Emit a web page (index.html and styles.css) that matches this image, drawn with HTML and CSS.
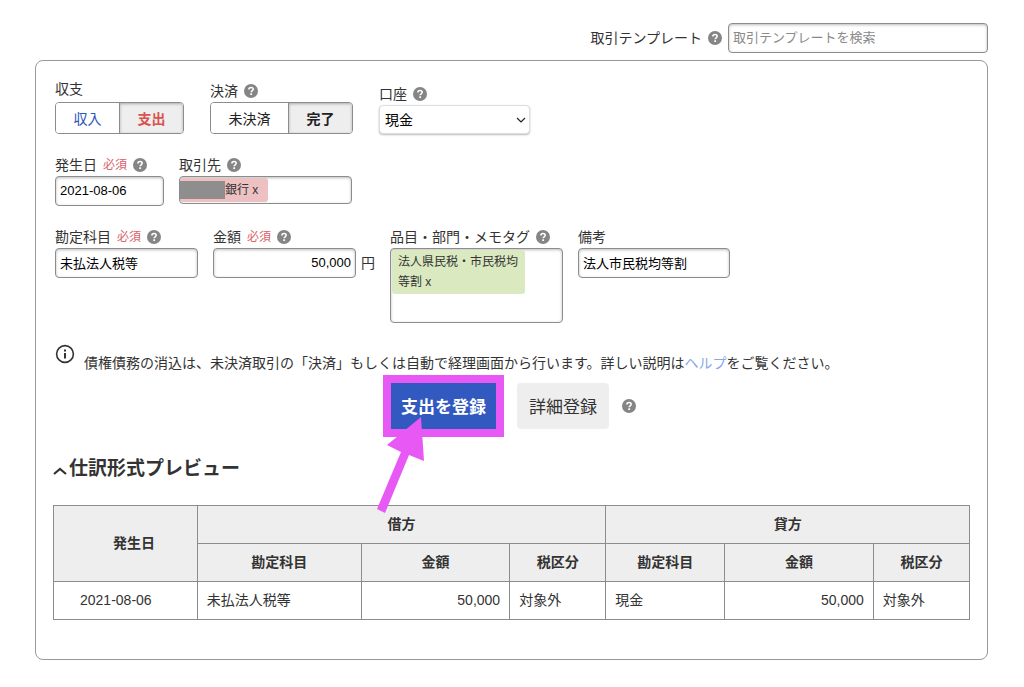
FILE: index.html
```html
<!DOCTYPE html>
<html lang="ja">
<head>
<meta charset="utf-8">
<meta name="viewport" content="width=device-width, initial-scale=1">
<title>取引の登録</title>
<link rel="stylesheet" href="styles.css">
</head>
<body>
<svg class="symbols" aria-hidden="true">
  <symbol id="help" viewBox="0 0 16 16">
    <circle cx="8" cy="8" r="8" fill="#858585"/>
    <path d="M5.6 6.4C5.6 4.8 6.6 4 8.1 4s2.4.9 2.4 2.1c0 1.7-2.3 1.7-2.3 3.3" fill="none" stroke="#fff" stroke-width="1.8"/>
    <rect x="7.2" y="10.6" width="2" height="2" fill="#fff"/>
  </symbol>
</svg>

<div class="template-search">
  <label for="template">取引テンプレート</label>
  <svg class="help"><use href="#help"/></svg>
  <input class="text-input template-input" id="template" type="text" placeholder="取引テンプレートを検索">
</div>

<main class="panel">
  <form class="entry">
    <div class="row row-wide">
      <div class="field field-spaced">
        <div class="label" id="l-kind">収支</div>
        <div class="toggle" role="group" aria-labelledby="l-kind">
          <button class="toggle-item income" type="button" aria-pressed="false">収入</button>
          <button class="toggle-item expense is-on" type="button" aria-pressed="true">支出</button>
        </div>
      </div>
      <div class="field">
        <div class="label"><span id="l-settle">決済</span><svg class="help"><use href="#help"/></svg></div>
        <div class="toggle" role="group" aria-labelledby="l-settle">
          <button class="toggle-item unsettled" type="button" aria-pressed="false">未決済</button>
          <button class="toggle-item is-on" type="button" aria-pressed="true">完了</button>
        </div>
      </div>
      <div class="field">
        <div class="label"><label for="account">口座</label><svg class="help"><use href="#help"/></svg></div>
        <div class="select-wrap">
          <select class="select" id="account"><option>現金</option></select>
          <svg class="select-arrow" viewBox="0 0 10 6"><path d="M1 1l4 4 4-4" fill="none" stroke="#222" stroke-width="1.2"/></svg>
        </div>
      </div>
    </div>

    <div class="row">
      <div class="field">
        <div class="label"><label for="date">発生日</label><span class="required">必須</span><svg class="help"><use href="#help"/></svg></div>
        <input class="text-input w-date" id="date" type="text" value="2021-08-06">
      </div>
      <div class="field">
        <div class="label"><span id="l-partner">取引先</span><svg class="help"><use href="#help"/></svg></div>
        <div class="tag-box partner-box" role="group" aria-labelledby="l-partner">
          <span class="tag tag-partner"><span class="mask"></span>銀行 <button class="tag-remove" type="button">x</button></span>
        </div>
      </div>
    </div>

    <div class="row">
      <div class="field">
        <div class="label"><label for="item">勘定科目</label><span class="required">必須</span><svg class="help"><use href="#help"/></svg></div>
        <input class="text-input w-item" id="item" type="text" value="未払法人税等">
      </div>
      <div class="field">
        <div class="label"><label for="amount">金額</label><span class="required">必須</span><svg class="help"><use href="#help"/></svg></div>
        <div class="amount">
          <input class="text-input w-item amount-input" id="amount" type="text" value="50,000">
          <span>円</span>
        </div>
      </div>
      <div class="field">
        <div class="label"><span id="l-tags">品目・部門・メモタグ</span><svg class="help"><use href="#help"/></svg></div>
        <div class="tag-box memo-box" role="group" aria-labelledby="l-tags">
          <span class="tag tag-memo">法人県民税・市民税均<wbr>等割 <button class="tag-remove" type="button">x</button></span>
        </div>
      </div>
      <div class="field">
        <div class="label"><label for="note">備考</label></div>
        <input class="text-input w-note" id="note" type="text" value="法人市民税均等割">
      </div>
    </div>

    <div class="notice">
      <svg class="info" viewBox="0 0 20 20"><circle cx="10" cy="10" r="8.4" fill="none" stroke="#333" stroke-width="1.6"/><path d="M10 9v5.4M10 5.4v2" stroke="#333" stroke-width="2"/></svg>
      <p>債権債務の消込は、未決済取引の「決済」もしくは自動で経理画面から行います。詳しい説明は<a href="#">ヘルプ</a>をご覧ください。</p>
    </div>

    <div class="actions">
      <div class="highlight">
        <button class="btn btn-primary" type="submit">支出を登録</button>
        <svg class="arrow" viewBox="0 0 50 97"><path d="M44 0L47 44L32 38L8 96L0 92L24 35L10 28Z" fill="#e858f5"/></svg>
      </div>
      <button class="btn btn-secondary" type="button">詳細登録</button>
      <svg class="help"><use href="#help"/></svg>
    </div>
  </form>

  <h2 class="preview-title">
    <svg class="chevron" viewBox="0 0 14 8"><path d="M1 7l6-5 6 5" fill="none" stroke="#333" stroke-width="2.2"/></svg>仕訳形式プレビュー
  </h2>

  <table class="journal">
    <colgroup><col class="c-date"><col class="c-debit-item"><col class="c-amount"><col class="c-tax"><col class="c-credit-item"><col class="c-amount"><col class="c-tax"></colgroup>
    <thead>
      <tr><th class="date-head" rowspan="2">発生日</th><th colspan="3">借方</th><th colspan="3">貸方</th></tr>
      <tr><th>勘定科目</th><th>金額</th><th>税区分</th><th>勘定科目</th><th>金額</th><th>税区分</th></tr>
    </thead>
    <tbody>
      <tr><td class="date-cell">2021-08-06</td><td>未払法人税等</td><td class="num">50,000</td><td>対象外</td><td>現金</td><td class="num">50,000</td><td>対象外</td></tr>
    </tbody>
  </table>
</main>
</body>
</html>
```

FILE: styles.css
```css
* { box-sizing: border-box; }

body {
  margin: 0;
  padding: 23px 36px 27px 35px;
  background: #fff;
  color: #333;
  font: 14px/20px "Liberation Sans", "Noto Sans CJK JP", sans-serif;
}

button, input, select { font-family: inherit; margin: 0; }

.symbols { position: absolute; width: 0; height: 0; }
.help { width: 14px; height: 14px; flex: none; }

.template-search {
  display: flex;
  align-items: center;
  justify-content: flex-end;
  gap: 6px;
  margin-bottom: 7px;
}

.text-input {
  height: 30px;
  padding: 0 4px 2px;
  border: 1px solid #8c8c8c;
  border-radius: 4px;
  background: #fff;
  box-shadow: inset 0 1px 3px #bbb;
  color: #000;
  font-size: 13px;
}
.text-input::placeholder { color: #8a8a8a; opacity: 1; }

.template-input { width: 260px; }
.w-date { width: 109px; }
.w-item { width: 143px; }
.w-note { width: 152px; }

.panel {
  padding: 18px 17px 39px;
  border: 1px solid #999;
  border-radius: 8px;
}

.entry {
  display: flex;
  flex-direction: column;
  gap: 21px;
  padding: 0 2px;
}

.row { display: flex; align-items: flex-start; gap: 15px; }
.row-wide { align-items: flex-end; gap: 26px; }

.field { display: flex; flex-direction: column; gap: 1px; }
.field-spaced { gap: 3px; }

.label { display: flex; align-items: center; gap: 6px; }
.required { color: #d9626a; font-size: 12px; }

.toggle {
  display: flex;
  height: 32px;
  border: 1px solid #8c8c8c;
  border-radius: 4px;
  overflow: hidden;
}
.toggle-item {
  width: 64px;
  padding: 0;
  border: 0;
  background: #fff;
  color: #222;
  font-size: 14px;
}
.toggle-item.is-on {
  border-left: 1px solid #8c8c8c;
  background: #eee;
  box-shadow: inset 0 1px 3px #aaa;
  font-weight: bold;
}
.toggle-item.income { width: 63px; color: #2c56bd; }
.toggle-item.expense { color: #d9534f; }
.toggle-item.unsettled { width: 77px; }

.select-wrap { position: relative; width: 151px; }
.select {
  display: block;
  width: 100%;
  height: 29px;
  padding: 0 5px;
  border: 1px solid #ddd;
  border-radius: 4px;
  background: #fff;
  box-shadow: 0 1px 2px #bbb;
  color: #000;
  font-size: 14px;
  appearance: none;
}
.select-arrow {
  position: absolute;
  right: 4px;
  top: 12px;
  width: 10px;
  height: 6px;
  pointer-events: none;
}

.tag-box {
  width: 173px;
  border: 1px solid #8c8c8c;
  border-radius: 4px;
  background: #fff;
  box-shadow: inset 0 1px 3px #bbb;
}
.partner-box { height: 28px; padding: 1px 0; }
.memo-box { height: 75px; padding: 1px; }

.tag { border-radius: 3px; font-size: 12px; }
.tag-partner {
  display: inline-flex;
  align-items: center;
  height: 24px;
  padding-right: 10px;
  background: #edc0c1;
  white-space: pre;
}
.mask { width: 45px; height: 18px; background: #8e8e8e; }
.tag-memo {
  display: block;
  width: 133px;
  padding: 2px 6px;
  background: #dae9c0;
}
.tag-remove {
  padding: 0;
  border: 0;
  background: none;
  color: inherit;
  font-size: 12px;
}

.amount { display: flex; align-items: center; gap: 5px; }
.amount-input { text-align: right; }

.notice { display: flex; align-items: flex-start; gap: 9px; }
.notice p { margin: 0; padding-top: 9px; }
.notice a { color: #86a7ec; text-decoration: none; }
.info { width: 20px; height: 20px; flex: none; }

.actions {
  display: flex;
  align-items: center;
  justify-content: center;
  gap: 13px;
  margin-top: -19px;
  padding-right: 4px;
}
.highlight { position: relative; border: 8px solid #e858f5; }
.arrow {
  position: absolute;
  left: -14px;
  top: 34px;
  width: 50px;
  height: 97px;
  pointer-events: none;
}
.btn {
  display: block;
  height: 46px;
  padding: 0 12px 2px;
  border: 0;
  font-size: 17px;
}
.btn-primary { padding: 0 10px 2px; background: #3159bf; color: #fff; font-weight: bold; }
.btn-secondary { border-radius: 4px; background: #eee; color: #333; }

.preview-title {
  display: flex;
  align-items: center;
  gap: 2px;
  margin: 20px 0 24px;
  font-size: 19px;
  line-height: 24px;
}
.chevron { width: 14px; height: 8px; margin-top: 4px; }

.journal { width: 100%; border-collapse: collapse; table-layout: fixed; }
.journal th, .journal td {
  height: 38px;
  padding: 0 9px 1px;
  border: 1px solid #8c8c8c;
  text-align: left;
}
.journal th { background: #eee; text-align: center; }
.journal .date-head { padding-left: 26px; }
.journal .date-cell { padding-left: 26px; }
.journal .num { text-align: right; }
.c-date { width: 15.7%; }
.c-debit-item { width: 17.9%; }
.c-amount { width: 16.2%; }
.c-tax { width: 10.5%; }
.c-credit-item { width: 13%; }
```
